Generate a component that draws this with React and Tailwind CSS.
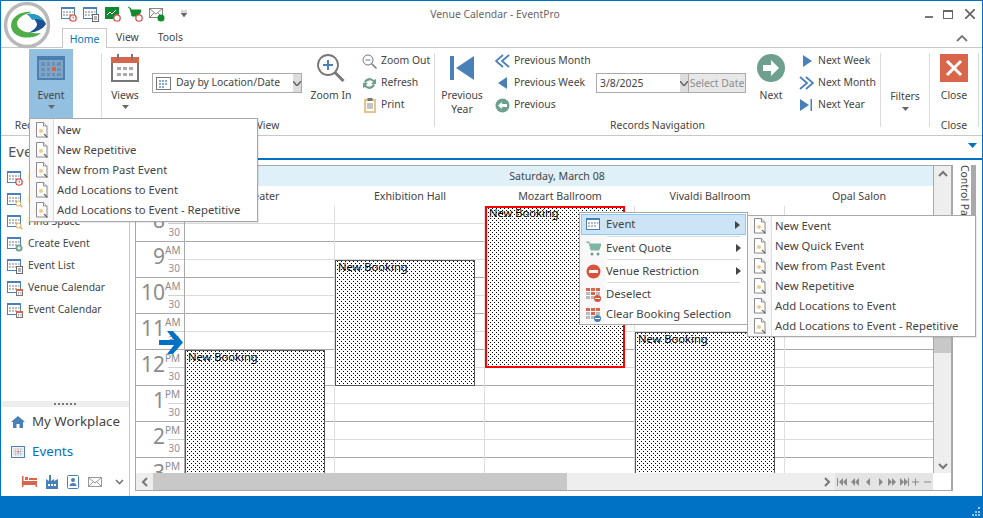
const BLUE = '#4a80b8'

function Caret({ className = '' }) {
  return <svg width="7" height="4" viewBox="0 0 7 4" className={className}><path d="M0 0h7L3.5 4z" fill="#666" /></svg>
}

function CalIcon({ badge }) {
  return (
    <svg width="16" height="16" viewBox="0 0 16 16">
      <rect x="0.5" y="1.5" width="13" height="11" fill="#fff" stroke={BLUE} />
      <rect x="0" y="1" width="14" height="2" fill={BLUE} />
      <path d="M2 5h2v2H2zM5 5h2v2H5zM8 5h2v2H8zM11 5h1.5v2H11zM2 8h2v2H2zM5 8h2v2H5zM8 8h2v2H8z" fill="#bbb" />
      {badge === 'clock' && <g><circle cx="12" cy="12" r="3.2" fill="#fff" stroke="#d9534f" strokeWidth="1.3" /><path d="M12 10.5V12h1.3" stroke="#666" fill="none" strokeWidth=".8" /></g>}
      {badge === 'find' && <g><circle cx="11.5" cy="11.5" r="2.5" fill="#fff" stroke="#e3a857" /><path d="M13.3 13.3l2 2" stroke="#e3a857" strokeWidth="1.3" /></g>}
      {badge === 'plus' && <g><circle cx="12" cy="12" r="3.5" fill="#6fa08f" /><path d="M12 10v4M10 12h4" stroke="#fff" /></g>}
      {badge === 'list' && <g><rect x="9.5" y="8.5" width="6" height="7" fill="#fff" stroke="#666" /><path d="M11 11h3M11 13h3" stroke="#666" /></g>}
      {badge === 'venue' && <g><rect x="9.5" y="9.5" width="6" height="6" fill="#fff" stroke="#777" /><rect x="9" y="9" width="7" height="2" fill="#d9634a" /><path d="M11 12.5h1M13.5 12.5h1M11 14h1M13.5 14h1" stroke="#888" /></g>}
    </svg>
  )
}

function DocIcon() {
  return (
    <svg width="14" height="16" viewBox="0 0 14 16">
      <path d="M1.5 .5h7l3.5 3.5v11H1.5z" fill="#fff" stroke="#8a8a8a" />
      <path d="M8.5 .5V4H12" fill="#eee" stroke="#8a8a8a" />
      <circle cx="6" cy="9" r="2" fill="#f2c88c" />
      <path d="M9 12l3.5 3.500" stroke="#666" strokeWidth="1.2" />
    </svg>
  )
}

function PopMenu({ items, className }) {
  return (
    <div className={`absolute z-20 bg-white border border-[#a9a9a9] text-[11.3px] shadow-[1px_1px_1px_rgba(0,0,0,0.08)] ${className}`}>
      <div className="absolute left-0 top-0 bottom-0 w-[24px] bg-[#f8f8f8] border-r border-[#dedede]" />
      {items.map(label => (
        <div key={label} className="relative h-[20px] flex items-center">
          <span className="w-[24px] flex justify-center shrink-0"><DocIcon /></span>
          <span className="pl-[3px] pr-3 whitespace-nowrap">{label}</span>
        </div>
      ))}
    </div>
  )
}

function BigBtn({ icon, label, label2, caret, w, className = '' }) {
  return (
    <div className={`flex flex-col items-center pt-[5px] shrink-0 ${className}`} style={{ width: w }}>
      <div className="h-[28px] flex items-center justify-center">{icon}</div>
      <div className="mt-[5px] leading-[16px] whitespace-nowrap">{label}</div>
      {label2 && <div className="leading-[13px] whitespace-nowrap">{label2}</div>}
      {caret && <Caret className="mt-[2px]" />}
    </div>
  )
}

function SmallList({ rows, className = '' }) {
  return (
    <div className={`flex flex-col pt-px shrink-0 ${className}`}>
      {rows.map(([icon, label]) => (
        <div key={label} className="h-[22px] flex items-center whitespace-nowrap">
          <span className="w-[15px] mr-[4px] flex justify-center shrink-0">{icon}</span>
          {label}
        </div>
      ))}
    </div>
  )
}

function Group({ w, label, children, sep = true }) {
  return (
    <>
      <div className="flex flex-col shrink-0" style={{ width: w }}>
        <div className="h-[68px] flex">{children}</div>
        <div className="h-[17px] leading-[17px] text-center whitespace-nowrap">{label}</div>
      </div>
      {sep && <div className="w-px h-[74px] mt-[4px] bg-[#dcdcdc] shrink-0" />}
    </>
  )
}

const dbl = (flip) => (
  <svg width="15" height="14" viewBox="0 0 15 14" className={flip ? 'scale-x-[-1]' : ''}>
    <path d="M8 1L1 7l7 6M14 1L7 7l7 6" fill="none" stroke={BLUE} strokeWidth="1.8" />
  </svg>
)

function TimeCell({ hour, ap }) {
  return (
    <div className="h-[36px] border-b border-[#a9a9a9] flex">
      <div className="w-[29px] shrink-0 text-right text-[21px] leading-[28px] text-[#8c8c8c]">{hour}</div>
      <div className="flex-1 text-[10px]">
        <div className="h-[18px] border-b border-[#d0d0d0] ml-[3px] leading-[17px] text-[#8c8c8c]"><span className="-ml-[3px]">{ap}</span></div>
        <div className="h-[17px] leading-[17px] text-right pr-[4px] text-[#9a8ea0]">30</div>
      </div>
    </div>
  )
}

function Booking({ top, height, selected }) {
  return (
    <div className={`absolute left-0 w-[140px] overflow-hidden bg-white text-[11.2px] ${selected ? 'border-2 border-[#f00]' : 'border border-[#555]'}`} style={{ top, height }}>
      <svg className="absolute inset-0 w-full h-full" shapeRendering="crispEdges">
        <defs>
          <pattern id={`h${top}`} width="4" height="4" patternUnits="userSpaceOnUse">
            <rect x="1" y="0" width="1" height="1" fill="#000" />
            <rect x="3" y="2" width="1" height="1" fill="#000" />
          </pattern>
        </defs>
        <rect width="100%" height="100%" fill={`url(#h${top})`} />
      </svg>
      <div className={`relative pl-[2px] leading-[12px] text-black whitespace-nowrap ${selected ? '-mt-px' : ''}`}>New Booking</div>
    </div>
  )
}

function GridCol({ w, children, last }) {
  return (
    <div className={`relative shrink-0 ${last ? '' : 'border-r border-[#dedede]'}`} style={{ width: w }}>
      {[0, 1, 2, 3, 4, 5, 6, 7].map(i => (
        <div key={i} className="h-[36px] border-b border-[#a9a9a9]">
          <div className="h-[18px] border-b border-[#dcdcdc]" />
        </div>
      ))}
      {children}
    </div>
  )
}

function NavGlyphs() {
  return (
    <svg width="98" height="16" viewBox="0 0 98 16">
      <g fill="#8a8a8a">
        <path d="M2 4h1v8H2zM8 4v8L4 8zM12 4v8L8 8z" />
        <path d="M20 4v8l-4-4zM24 4v8l-4-4z" />
        <path d="M35 4v8l-4-4z" />
        <path d="M44 4v8l4-4z" />
        <path d="M53 4v8l4-4zM57 4v8l4-4z" />
        <path d="M65 4v8l4-4zM69 4v8l4-4zM73 4h1v8h-1z" />
        <path d="M77 7.5h7v1h-7zM80 4.5h1v7h-1zM89 7.5h7v1h-7z" />
      </g>
    </svg>
  )
}

export default function App() {
  const evMenu = ['New', 'New Repetitive', 'New from Past Event', 'Add Locations to Event', 'Add Locations to Event - Repetitive']
  const subMenu = ['New Event', 'New Quick Event', 'New from Past Event', 'New Repetitive', 'Add Locations to Event', 'Add Locations to Event - Repetitive']
  const sideItems = [['clock', 'Follow Up List'], ['find', 'Find Event'], ['find', 'Find Space'], ['plus', 'Create Event'], ['list', 'Event List'], ['venue', 'Venue Calendar'], ['venue', 'Event Calendar']]
  const hours = [['8', 'AM'], ['9', 'AM'], ['10', 'AM'], ['11', 'AM'], ['12', 'PM'], ['1', 'PM'], ['2', 'PM'], ['3', 'PM']]
  const cols = ['Theater', 'Exhibition Hall', 'Mozart Ballroom', 'Vivaldi Ballroom', 'Opal Salon']

  return (
    <div className="relative w-[983px] h-[518px] overflow-hidden bg-white flex flex-col border-x border-t border-[#0072c6] text-[10.4px] text-[#444] font-['Noto_Sans',sans-serif]">
      {/* logo */}
      <svg width="48" height="48" viewBox="0 0 48 48" className="absolute left-[2px] top-0 z-10">
        <circle cx="24" cy="24" r="21.5" fill="#fff" stroke="#b9b9b9" strokeWidth="3.5" />
        <path d="M8 25C8 15 19 10 29 11c-8 2-15 6-15 12 1 7 11 10 24 9-7 7-29 7-30-7z" fill="#4fae45" />
        <path d="M24 13c8-1 16 3 19 10-3 5-9 8-18 9 6-3 9-6 9-9-1-4-5-7-10-10z" fill="#1d4f91" />
        <path d="M24 13c8-1 14 2 17 7-5-2-9-2-12-1-1-2-3-4-5-6z" fill="#2a9ac0" />
      </svg>

      {/* title bar + tabs */}
      <div className="h-[46px] relative shrink-0 flex flex-col">
        <div className="h-[26px] flex items-center shrink-0 pl-[60px] relative">
          <div className="flex items-center gap-[6px]">
            <CalIcon badge="clock" />
            <CalIcon badge="list" />
            <svg width="16" height="16" viewBox="0 0 16 16"><rect x="0" y="1" width="14" height="12" fill="#0f8a2f" /><path d="M2 9l3-3 2 2 4-4" stroke="#fff" fill="none" /><circle cx="12" cy="12" r="3.2" fill="#fff" stroke="#d9534f" strokeWidth="1.3" /></svg>
            <svg width="16" height="16" viewBox="0 0 16 16"><path d="M1 1l2 1 1 2h10l-2 6H5L3 2" fill="#0f8a2f" stroke="#0f8a2f" /><circle cx="12" cy="12" r="3.2" fill="#fff" stroke="#d9534f" strokeWidth="1.3" /></svg>
            <svg width="16" height="16" viewBox="0 0 16 16"><rect x=".5" y="2.5" width="13" height="9" fill="#fff" stroke="#888" /><path d="M1 3l6 5 6-5M1 11l4-4M13 11L9 7" stroke="#888" fill="none" /><circle cx="12" cy="12" r="3.5" fill="#0f8a2f" /></svg>
          </div>
          <svg width="8" height="8" viewBox="0 0 8 8" className="ml-[15px]"><path d="M1 1h6M1 3h6L4 7z" fill="#666" stroke="#666" strokeWidth=".5" /></svg>
          <div className="absolute left-0 right-0 top-0 h-[26px] leading-[27px] text-center text-[#666] pl-[7px]">Venue Calendar - EventPro</div>
          <div className="absolute right-[7px] top-[8px] flex items-center gap-[10px]">
            <div className="w-[8px] h-[2px] bg-[#777] mt-[6px]" />
            <div className="w-[10px] h-[9px] border border-[#666] border-t-2" />
            <svg width="10" height="10" viewBox="0 0 10 10" className="ml-[2px]"><path d="M0 0l10 10M10 0L0 10" stroke="#666" strokeWidth="1.8" /></svg>
          </div>
        </div>
        <div className="flex-1 flex items-end pl-[61px] relative">
          <div className="h-[20px] w-[45px] border border-b-0 border-[#c8c8c8] bg-white text-center leading-[20px] text-[#0072c6] -mb-px relative z-[1]">Home</div>
          <div className="h-[20px] leading-[20px] ml-[9px]">View</div>
          <div className="h-[20px] leading-[20px] ml-[19px]">Tools</div>
          <svg width="12" height="7" viewBox="0 0 12 7" className="absolute right-[14px] top-[8px]"><path d="M1 6l5-5 5 5" fill="none" stroke="#777" strokeWidth="1.8" /></svg>
        </div>
      </div>
      <div className="h-px bg-[#c8c8c8] shrink-0" />

      {/* ribbon */}
      <div className="h-[88px] shrink-0 border-b border-[#c8c8c8] flex pt-[1px] relative">
        <Group w={100} label="Record Actions">
          <div className="ml-[28px] w-[44px] h-[69px] bg-[#93bfe0]">
            <BigBtn w={44} caret label="Event" icon={
              <svg width="28" height="24" viewBox="0 0 28 24"><rect width="28" height="24" fill="#4a7fb0" /><rect x="2" y="4" width="24" height="18" fill="#7ea6c8" />
                <path d="M4 6h4v4H4zM10 6h3v4h-3zM15 6h3v4h-3zM20 6h4v4h-4zM4 12h4v3H4zM10 12h3v3h-3zM20 12h4v3h-4zM4 17h4v3H4zM10 17h3v3h-3zM15 17h3v3h-3zM20 17h4v3h-4z" fill="#6b8fb0" /><rect x="15" y="11" width="4" height="4" fill="#d9634a" /></svg>
            } />
          </div>
        </Group>
        <Group w={332} label="View">
          <BigBtn w={32} caret label="Views" className="ml-[7px]" icon={
            <svg width="28" height="28" viewBox="0 0 28 28"><rect x="1" y="4" width="26" height="23" fill="#fff" stroke="#777" strokeWidth="2" /><rect x="0" y="3" width="28" height="6" fill="#d9654a" /><path d="M6 0h2v6H6zM20 0h2v6h-2z" fill="#777" /><path d="M6 13h4v3H6zM12 13h4v3h-4zM18 13h4v3h-4zM6 19h4v3H6zM12 19h4v3h-4zM18 19h4v3h-4z" fill="#aaa" /></svg>
          } />
          <div className="ml-[11px] mt-[24px] w-[150px] h-[20px] border border-[#aaa] flex shrink-0">
            <div className="flex-1 flex items-center pl-[3px] gap-[5px] whitespace-nowrap">
              <svg width="15" height="13" viewBox="0 0 15 13"><rect x=".5" y=".5" width="14" height="12" fill="#fff" stroke="#777" /><path d="M3 3h2v2H3zM6 3h2v2H6zM9 3h2v2H9zM3 6h2v2H3zM6 6h2v2H6zM9 6h2v2H9zM3 9h2v2H3zM6 9h2v2H6z" fill="#8aa8c8" /></svg>
              Day by Location/Date
            </div>
            <div className="w-[8px] bg-[#ddd] flex items-center justify-center"><svg width="8" height="5" viewBox="0 0 8 5"><path d="M0 0l4 5 4-5" fill="none" stroke="#666" strokeWidth="1.5" /></svg></div>
          </div>
          <BigBtn w={38} label="Zoom In" className="ml-[10px]" icon={
            <svg width="28" height="28" viewBox="0 0 28 28"><circle cx="11" cy="11" r="10" fill="#fff" stroke="#777" strokeWidth="1.8" /><path d="M17.5 18l9 9" stroke="#777" strokeWidth="3" /><path d="M6 11h10M11 6v10" stroke={BLUE} strokeWidth="2" /></svg>
          } />
          <SmallList className="ml-[12px]" rows={[
            [<svg width="15" height="15" viewBox="0 0 15 15"><circle cx="6" cy="6" r="5" fill="#fff" stroke="#777" /><path d="M9.5 9.5l5 5" stroke="#777" strokeWidth="1.5" /><path d="M3.5 6h5" stroke={BLUE} /></svg>, 'Zoom Out'],
            [<svg width="15" height="15" viewBox="0 0 15 15"><path d="M2 6a6 6 0 0 1 10-2l2-1v5H9l2-2a4 4 0 0 0-7 1zM13 9a6 6 0 0 1-10 2l-2 1V7h5L4 9a4 4 0 0 0 7-1z" fill="#6fa08f" /></svg>, 'Refresh'],
            [<svg width="12" height="15" viewBox="0 0 12 15"><rect x="1" y="2" width="10" height="12" fill="#fff" stroke="#e3bd80" strokeWidth="1.8" /><rect x="3.5" y="0" width="5" height="3" fill="#777" /><path d="M3 6h6M3 8h6M3 10h6" stroke="#888" /></svg>, 'Print'],
          ]} />
        </Group>
        <Group w={445} label="Records Navigation">
          <BigBtn w={50} label="Previous" label2="Year" className="ml-[2px]" icon={
            <svg width="24" height="24" viewBox="0 0 24 24"><path d="M0 0h4v24H0zM24 0v24L6 12z" fill={BLUE} /></svg>
          } />
          <SmallList className="ml-[8px] w-[101px]" rows={[
            [dbl(false), 'Previous Month'],
            [<svg width="10" height="12" viewBox="0 0 10 12"><path d="M9 0v12L0 6z" fill={BLUE} /></svg>, 'Previous Week'],
            [<svg width="15" height="15" viewBox="0 0 15 15"><circle cx="7.5" cy="7.5" r="7" fill="#6fa08f" /><path d="M3 7.5L7 4v2h5v3H7v2z" fill="#fff" /></svg>, 'Previous'],
          ]} />
          <div className="mt-[24px] h-[20px] flex shrink-0">
            <div className="w-[84px] border border-[#aaa] border-r-0 pl-[3px] leading-[18px]">3/8/2025</div>
            <div className="w-[8px] bg-[#ddd] border-y border-[#aaa] flex items-center justify-center"><svg width="8" height="5" viewBox="0 0 8 5"><path d="M0 0l4 5 4-5" fill="none" stroke="#666" strokeWidth="1.5" /></svg></div>
            <div className="w-[58px] bg-[#e8e8e8] border border-[#aaa] text-[#8c8c8c] text-center leading-[18px] whitespace-nowrap">Select Date</div>
          </div>
          <BigBtn w={40} label="Next" className="ml-[5px]" icon={
            <svg width="28" height="28" viewBox="0 0 28 28"><circle cx="14" cy="14" r="14" fill="#6fa08f" /><path d="M6 11h8V6l8 8-8 8v-5H6z" fill="#fff" /></svg>
          } />
          <SmallList className="ml-[8px]" rows={[
            [<svg width="10" height="12" viewBox="0 0 10 12"><path d="M1 0v12l9-6z" fill={BLUE} /></svg>, 'Next Week'],
            [dbl(true), 'Next Month'],
            [<svg width="13" height="12" viewBox="0 0 13 12"><path d="M0 0v12l9-6zM10.5 0H12v12h-1.5z" fill={BLUE} /></svg>, 'Next Year'],
          ]} />
        </Group>
        <Group w={48} label="">
          <div className="w-full flex flex-col items-center pt-[39px] leading-[16px]">Filters<Caret className="mt-[3px]" /></div>
        </Group>
        <Group w={48} label="Close">
          <BigBtn w={48} label="Close" icon={
            <svg width="28" height="28" viewBox="0 0 28 28"><rect width="28" height="28" fill="#d9654a" /><path d="M7 7l14 14M21 7L7 21" stroke="#fff" strokeWidth="3" /></svg>
          } />
        </Group>
      </div>

      {/* body */}
      <div className="flex-1 flex min-h-0 relative">
        <div className="w-[129px] shrink-0 border-r border-[#c8c8c8] flex flex-col">
          <div className="h-[31px] pl-[7px] pt-[5px] text-[15px] leading-[20px] text-[#555] shrink-0">Events</div>
          {sideItems.map(([b, label]) => (
            <div key={label} className="h-[22px] flex items-center pl-[6px] gap-[5px] shrink-0 whitespace-nowrap">
              <CalIcon badge={b} />{label}
            </div>
          ))}
          <div className="flex-1" />
          <div className="h-[6px] bg-[#eee] flex justify-center items-center gap-[2px] shrink-0">
            {[0, 1, 2, 3, 4, 5].map(i => <div key={i} className="w-[2px] h-[2px] bg-[#777]" />)}
          </div>
          <div className="h-[30px] flex items-center pl-[10px] gap-[7px] text-[13.3px] shrink-0">
            <svg width="14" height="12" viewBox="0 0 14 12"><path d="M7 0l7 6h-2v6H8.5V8h-3v4H2V6H0z" fill={BLUE} /></svg>
            My Workplace
          </div>
          <div className="h-[30px] flex items-center pl-[10px] gap-[7px] text-[13.3px] text-[#0072c6] shrink-0">
            <svg width="14" height="12" viewBox="0 0 14 12"><rect x=".5" y=".5" width="13" height="11" fill="#f2f2f2" stroke={BLUE} /><path d="M2 3h10M2 5.500h10M2 8h10M4.500 3v7M7 3v7M9.500 3v7" stroke="#bbb" strokeWidth=".7" /><rect x="6.5" y="5" width="1.5" height="1.5" fill="#d9634a" /></svg>
            Events
          </div>
          <div className="h-[29px] flex items-center pl-[21px] gap-[9px] shrink-0">
            <svg width="15" height="11" viewBox="0 0 15 11"><path d="M0 0h1.5v5H15v6h-1.5V9h-12v2H0zM3 1h3v3H3zM7 2h8v2H7z" fill="#d9654a" /></svg>
            <svg width="12" height="14" viewBox="0 0 12 14"><path d="M3 0h2v6l3-2v2l4-2v10H0V4l3 2z" fill={BLUE} /><path d="M2 9h2v2H2zM5 9h2v2H5zM8 9h2v2H8z" fill="#fff" /></svg>
            <svg width="12" height="14" viewBox="0 0 12 14"><rect x=".5" y=".5" width="11" height="13" rx="1" fill="#fff" stroke={BLUE} /><circle cx="6" cy="5" r="2" fill={BLUE} /><path d="M2.500 11c0-4 7-4 7 0z" fill={BLUE} /></svg>
            <svg width="14" height="10" viewBox="0 0 14 10"><rect x=".5" y=".5" width="13" height="9" fill="#fff" stroke="#999" /><path d="M1 1l6 5 6-5M1 9l4-4M13 9L9 5" stroke="#999" fill="none" /></svg>
            <svg width="9" height="6" viewBox="0 0 9 6" className="ml-[4px]"><path d="M1 1l3.500 3.500L8 1" fill="none" stroke="#777" strokeWidth="1.6" /></svg>
          </div>
        </div>

        <div className="flex-1 min-w-0 flex flex-col">
          <div className="h-[24px] border-b-2 border-[#0072c6] shrink-0 relative">
            <svg width="9" height="5" viewBox="0 0 9 5" className="absolute right-[5px] top-[7px]"><path d="M0 0h9L4.5 5z" fill="#0072c6" /></svg>
          </div>
          <div className="flex mt-[5px] pl-[5px]">
            <div className="w-[818px] h-[326px] shrink-0 border border-r-2 border-[#a9a9a9] flex flex-col">
              <div className="flex flex-1 min-h-0">
                <div className="w-[797px] flex flex-col shrink-0 min-h-0">
                  <div className="h-[20px] bg-[#dff0f9] text-center leading-[20px] shrink-0 pl-[45px] text-[10.6px]">Saturday, March 08</div>
                  <div className="h-[20px] flex pl-[49px] shrink-0 leading-[20px] text-center text-[10.7px]">
                    {cols.map((c, i) => <div key={c} className="shrink-0" style={{ width: i === 4 ? 148 : 150 }}>{c}</div>)}
                  </div>
                  <div className="flex-1 min-h-0 overflow-hidden flex">
                    <div className="w-[49px] shrink-0 border-r border-[#a9a9a9]">
                      {hours.map(([h, a]) => <TimeCell key={h} hour={h} ap={a} />)}
                    </div>
                    <GridCol w={150}><Booking top={144} height={140} /></GridCol>
                    <GridCol w={150}><Booking top={54} height={126} /></GridCol>
                    <GridCol w={150}><Booking top={0} height={162} selected /></GridCol>
                    <GridCol w={150}><Booking top={126} height={150} /></GridCol>
                    <GridCol w={148} last />
                  </div>
                </div>
                <div className="flex-1 border-l border-[#a9a9a9] bg-[#eee] flex flex-col items-center relative">
                  <svg width="10" height="7" viewBox="0 0 10 7" className="mt-[4px]"><path d="M1 6l4-4 4 4" fill="none" stroke="#777" strokeWidth="2" /></svg>
                  <div className="absolute top-[50px] left-0 right-0 h-[137px] bg-[#c8c8c8]" />
                  <svg width="10" height="7" viewBox="0 0 10 7" className="mt-auto mb-[3px]"><path d="M1 1l4 4 4-4" fill="none" stroke="#777" strokeWidth="2" /></svg>
                </div>
              </div>
              <div className="h-[17px] flex shrink-0">
                <div className="w-[17px] bg-[#eee] flex items-center justify-center"><svg width="7" height="10" viewBox="0 0 7 10"><path d="M6 1L2 5l4 4" fill="none" stroke="#777" strokeWidth="2" /></svg></div>
                <div className="w-[414px] bg-[#c8c8c8]" />
                <div className="w-[268px] bg-[#eee] flex items-center justify-end pr-[4px]"><svg width="7" height="10" viewBox="0 0 7 10"><path d="M1 1l4 4-4 4" fill="none" stroke="#777" strokeWidth="2" /></svg></div>
                <div className="w-[98px] bg-[#e4e4e4] flex items-center"><NavGlyphs /></div>
              </div>
            </div>
            <div className="relative flex-1 h-[50px] overflow-hidden">
              <div className="pl-[5px] [writing-mode:vertical-rl] whitespace-nowrap leading-[14px]">Control Panel</div>
              <div className="absolute left-[18px] top-0 w-[5px] h-[50px] bg-[#a9a9a9]" />
            </div>
          </div>
        </div>

        {/* now marker */}
        <svg width="26" height="24" viewBox="0 0 26 24" className="absolute left-[157px] top-[195px] z-[5]"><path d="M1 9h15L9 0h6l10 11.5L15 23H9l7-9H1z" fill="#0072c6" /></svg>
      </div>

      {/* status bar */}
      <div className="h-[22px] bg-[#0072c6] shrink-0 relative">
        <svg width="10" height="10" viewBox="0 0 10 10" className="absolute right-[1px] bottom-[1px]"><path d="M7 0h2v2H7zM4 4h2v2H4zM7 4h2v2H7zM1 7h2v2H1zM4 7h2v2H4zM7 7h2v2H7z" fill="#9cc7e6" /></svg>
      </div>

      <PopMenu items={evMenu} className="left-[28px] top-[117px] w-[229px] py-px" />

      {/* context menu */}
      <div className="absolute z-20 left-[578px] top-[211px] w-[169px] h-[113px] bg-white border border-[#a9a9a9] p-px text-[11.3px]">
        <div className="absolute left-0 top-0 bottom-0 w-[26px] bg-[#f8f8f8]" />
        {[['Event', true], ['Event Quote', true], ['Venue Restriction', true], ['Deselect', false], ['Clear Booking Selection', false]].map(([label, arrow], i) => (
          <div key={label}>
            {i === 1 && <div className="h-px mt-[1px] bg-[#d8d8d8] ml-[26px] mr-[6px] relative" />}
            {i === 2 && <div className="h-px bg-[#d8d8d8] ml-[26px] mr-[6px] relative" />}
            {i === 3 && <div className="h-px mb-px bg-[#d8d8d8] ml-[26px] mr-[6px] relative" />}
            <div className={`relative flex items-center ${i === 0 ? 'h-[21px] bg-[#cde4f7] border border-[#90c8f6]' : i < 3 ? 'h-[22px]' : 'h-[20px]'}`}>
              <span className={`flex justify-center shrink-0 ${i === 0 ? 'w-[24px]' : 'w-[25px]'}`}>
                {i === 0 && <CalIcon />}
                {i === 1 && <svg width="15" height="15" viewBox="0 0 15 15"><path d="M0 1h3l2 8h8l2-6H4" fill="#7fb5a5" stroke="#7fb5a5" /><circle cx="6" cy="13" r="1.5" fill="#6fa08f" /><circle cx="12" cy="13" r="1.5" fill="#6fa08f" /></svg>}
                {i === 2 && <svg width="15" height="15" viewBox="0 0 15 15"><circle cx="7.5" cy="7.5" r="7" fill="#d9543f" /><rect x="3" y="6" width="9" height="3" fill="#fff" /></svg>}
                {i >= 3 && <svg width="15" height="15" viewBox="0 0 15 15"><path d="M0 1h4v3H0zM5 1h4v3H5zM10 1h4v3h-4zM5 5h4v3H5z" fill="#d9654a" /><path d="M0 5h4v3H0zM0 9h4v3H0zM5 9h4v3H5zM10 5h4v3h-4z" fill="#bbb" /><circle cx="11.5" cy="11.5" r="3.5" fill={i === 3 ? '#d9543f' : '#4a80b8'} /><rect x="9" y="11" width="5" height="1" fill="#fff" /></svg>}
              </span>
              <span className="whitespace-nowrap">{label}</span>
              {arrow && <svg width="5" height="8" viewBox="0 0 5 8" className="absolute right-[5px] top-1/2 -translate-y-1/2"><path d="M0 0l5 4-5 4z" fill="#444" /></svg>}
            </div>
          </div>
        ))}
      </div>
      <PopMenu items={subMenu} className="left-[746px] top-[214px] w-[229px]" />
    </div>
  )
}
